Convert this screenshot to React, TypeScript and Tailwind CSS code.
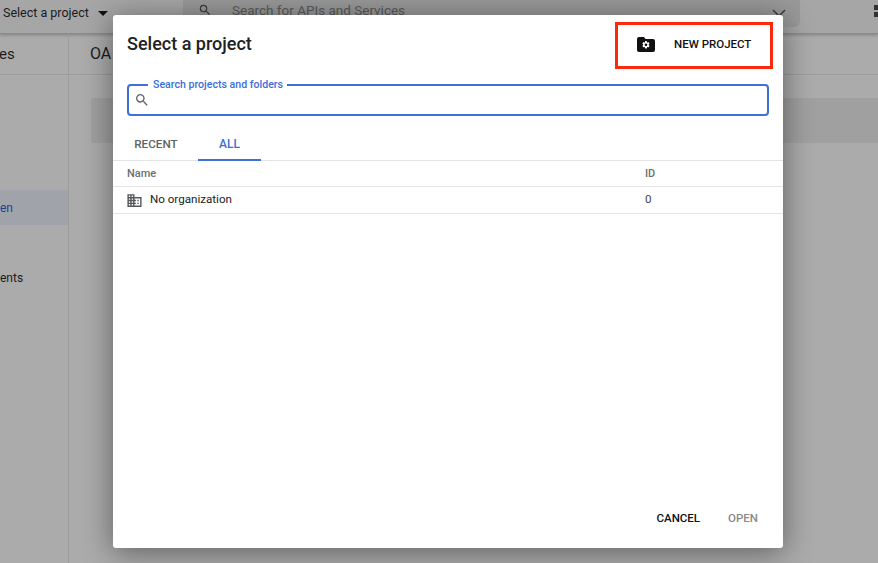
import React from "react";

const font = { fontFamily: "Roboto, 'Liberation Sans', sans-serif" };

function SearchIcon({ className }: { className: string }) {
  return (
    <svg viewBox="0 0 24 24" className={className} fill="currentColor">
      <path d="M15.5 14h-.79l-.28-.27A6.47 6.47 0 0 0 16 9.5 6.5 6.5 0 1 0 9.5 16c1.61 0 3.09-.59 4.23-1.57l.27.28v.79l5 4.99L20.49 19l-4.99-5zm-6 0C7.01 14 5 11.99 5 9.5S7.01 5 9.5 5 14 7.01 14 9.5 11.99 14 9.5 14z" />
    </svg>
  );
}

export default function App() {
  return (
    <div style={font} className="relative h-[563px] w-[878px] overflow-hidden bg-[#ababab] font-['Roboto']">
      {/* page behind the scrim */}
      <header className="flex h-[34px] items-start border-b border-[#8a8a8a] bg-[#a6a6a6] shadow-[0_1px_3px_rgba(0,0,0,0.25)]">
        <div className="flex w-[183px] items-center pl-[3px] pt-[4px] text-[12.5px] leading-[18px] text-[#1c1c1c]">
          <span>Select a project</span>
          <span className="ml-[9px] h-0 w-0 border-x-[5px] border-t-[5px] border-x-transparent border-t-[#111]" />
        </div>
        <div className="flex h-[27px] w-[617px] items-start justify-between rounded-b-[6px] bg-[#999999] pl-[15px] pr-[14px] text-[#3a3a3a]">
          <div className="flex items-start">
            <SearchIcon className="mt-[3px] h-[14px] w-[14px]" />
            <span className="ml-[20px] mt-[2px] text-[13.5px] leading-[17px] text-[#5b5b5b]">Search for APIs and Services</span>
          </div>
          <svg viewBox="0 0 14 8" className="mt-[9px] h-[8px] w-[14px]" fill="none" stroke="currentColor" strokeWidth="1.5">
            <path d="M1 1l6 6 6-6" />
          </svg>
        </div>
        <svg viewBox="0 0 4 12" className="ml-[74px] mt-[5px] h-[12px] w-[4px]" fill="#333">
          <rect width="4" height="5" y="0" />
          <rect width="4" height="5" y="7" />
        </svg>
      </header>
      <div className="flex h-[529px]">
        <aside className="h-full w-[69px] shrink-0 border-r border-[#9c9c9c] text-[12px] leading-[16px] text-[#1c1c1c]">
          <div className="flex h-[41px] items-center border-b border-[#9c9c9c] text-[15px]">
            <span className="-ml-[1px]">es</span>
          </div>
          <div className="mt-[115px] flex h-[35px] items-center bg-[#a1a3ab] text-[#1f3f91]">en</div>
          <div className="mt-[45px]">ents</div>
        </aside>
        <main className="min-w-0 flex-1">
          <div className="flex h-[41px] items-center border-b border-[#9c9c9c] pl-[21px] text-[16px] text-[#1c1c1c]">
            <span>OA</span>
          </div>
          <div className="ml-[22px] mt-[23px] h-[45px] rounded-l-[3px] bg-[#a0a0a0]" />
        </main>
      </div>

      {/* dialog */}
      <div className="absolute left-[113px] top-[15px] flex h-[533px] w-[670px] flex-col rounded-[3px] bg-white shadow-[0_4px_30px_rgba(0,0,0,0.45)]">
        <div className="flex h-[62px] items-start justify-between pl-[14px] pr-[10px]">
          <h1 className="mt-[17px] text-[18px] font-medium leading-[24px] text-[#202124]">Select a project</h1>
          <button className="mt-[7px] flex h-[47px] w-[158px] items-center border-[3px] border-[#fb2a0c] pl-[19px] text-[11.5px] font-medium text-[#111]">
            <svg viewBox="0 0 18 15" className="-mt-[2px] h-[15px] w-[18px]" fill="currentColor">
              <path d="M2 0h5l1.5 2H16a2 2 0 0 1 2 2v9a2 2 0 0 1-2 2H2a2 2 0 0 1-2-2V2a2 2 0 0 1 2-2z" />
              <g transform="translate(4.4 3.2) scale(0.38)">
                <path
                  fill="#fff"
                  d="M19.14 12.94c.04-.3.06-.61.06-.94s-.02-.64-.07-.94l2.03-1.58a.49.49 0 0 0 .12-.61l-1.92-3.32a.49.49 0 0 0-.59-.22l-2.39.96c-.5-.38-1.03-.7-1.62-.94l-.36-2.54a.48.48 0 0 0-.48-.41h-3.84a.48.48 0 0 0-.47.41l-.36 2.54c-.59.24-1.13.57-1.62.94l-2.39-.96a.49.49 0 0 0-.59.22L2.74 8.87a.48.48 0 0 0 .12.61l2.03 1.58c-.05.3-.09.63-.09.94s.02.64.07.94l-2.03 1.58a.49.49 0 0 0-.12.61l1.92 3.32c.12.22.37.29.59.22l2.39-.96c.5.38 1.03.7 1.62.94l.36 2.54c.05.24.24.41.48.41h3.84c.24 0 .44-.17.47-.41l.36-2.54c.59-.24 1.13-.56 1.62-.94l2.39.96c.22.08.47 0 .59-.22l1.92-3.32a.48.48 0 0 0-.12-.61l-2.01-1.58zM12 15.6A3.6 3.6 0 1 1 12 8.4a3.6 3.6 0 0 1 0 7.2z"
                />
              </g>
            </svg>
            <span className="ml-[19px] -mt-[2px]">NEW PROJECT</span>
          </button>
        </div>

        <div className="relative mx-[14px] mt-[7px] flex h-[32px] w-[642px] items-center rounded-[4px] border-2 border-[#3f6fd8] pl-[5px] text-[#5f6368]">
          <SearchIcon className="h-[16px] w-[16px]" />
          <span className="absolute -top-[8px] left-[19px] bg-white pl-[5px] pr-[4px] text-[10.6px] font-medium leading-[14px] text-[#3b6fd8]">Search projects and folders</span>
        </div>

        <div className="mt-[12px] flex h-[33px] border-b border-[#e4e4e4] pt-[1px] text-[12px] font-medium">
          <div className="flex w-[85px] items-center justify-center pl-[1px] text-[11.7px] text-[#5f6368]">RECENT</div>
          <div className="-mb-px flex w-[63px] items-center justify-center border-b-2 border-[#3f6fd8] text-[#3b6fd8]">ALL</div>
        </div>

        <div className="flex h-[26px] items-center border-b border-[#e4e4e4] pt-[1px] text-[11px] font-medium text-[#6b6f73]">
          <span className="ml-[14px] w-[518px]">Name</span>
          <span>ID</span>
        </div>
        <div className="flex h-[27px] items-center border-b border-[#e4e4e4] text-[11.6px] text-[#202124]">
          <svg viewBox="0 0 24 24" className="ml-[13px] h-[17px] w-[17px] shrink-0 text-[#55585b]" fill="currentColor">
            <path d="M12 7V3H2v18h20V7H12zM6 19H4v-2h2v2zm0-4H4v-2h2v2zm0-4H4V9h2v2zm0-4H4V5h2v2zm4 12H8v-2h2v2zm0-4H8v-2h2v2zm0-4H8V9h2v2zm0-4H8V5h2v2zm10 12h-8v-2h2v-2h-2v-2h2v-2h-2V9h8v10zm-2-8h-2v2h2v-2zm0 4h-2v2h2v-2z" />
          </svg>
          <span className="ml-[7px] w-[495px]">No organization</span>
          <span className="text-[#444]">0</span>
        </div>

        <div className="mt-auto flex items-center justify-end pb-[23px] pr-[25px] text-[11.5px] font-medium leading-[14px]">
          <span className="text-[#111]">CANCEL</span>
          <span className="ml-[28px] text-[#8a8a8a]">OPEN</span>
        </div>
      </div>
    </div>
  );
}
